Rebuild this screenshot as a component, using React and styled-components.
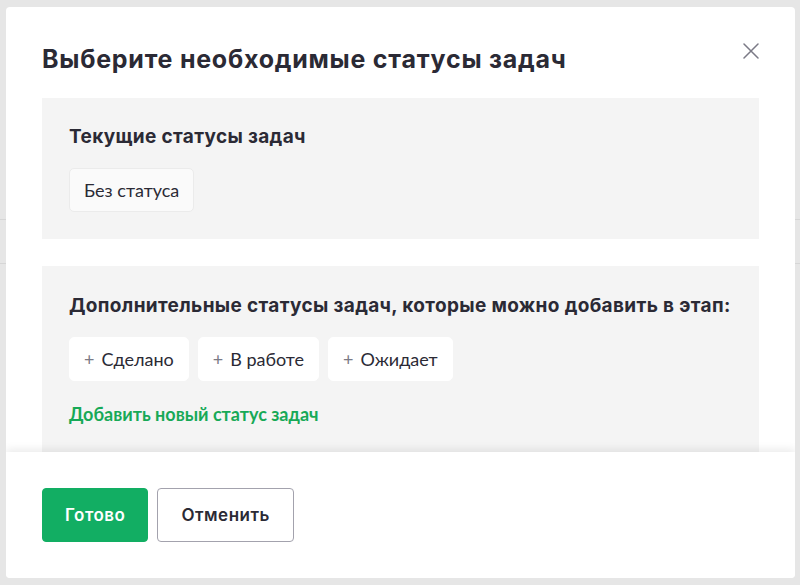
import React from "react";
import styled, { createGlobalStyle } from "styled-components";

const GlobalStyle = createGlobalStyle`
  html, body {
    margin: 0;
    padding: 0;
    background: #e5e5e5;
  }
  * {
    box-sizing: border-box;
  }
`;

const Page = styled.div`
  width: 800px;
  height: 585px;
  padding: 7px 5px 7px 6px;
  background-color: #e6e6e6;
  background-image: linear-gradient(
    to bottom,
    transparent 219px,
    #d6d6d6 219px,
    #d6d6d6 220px,
    transparent 220px,
    transparent 263px,
    #d6d6d6 263px,
    #d6d6d6 264px,
    transparent 264px
  );
`;

const Modal = styled.div`
  position: relative;
  width: 789px;
  height: 571px;
  background: #fff;
  border-radius: 4px;
  overflow: hidden;
  display: flex;
  flex-direction: column;
`;

const Body = styled.div`
  height: 445px;
  overflow: hidden;
  padding: 0 36px;
`;

const Header = styled.div`
  display: flex;
  justify-content: space-between;
  align-items: flex-start;
  padding-top: 36px;
  height: 91px;
`;

const Title = styled.h1`
  margin: 0;
  font-family: Inter, "Noto Sans", sans-serif;
  font-weight: 700;
  font-size: 25px;
  line-height: 32px;
  letter-spacing: 0.75px;
  color: #2b2a35;
`;

const Close = styled.button`
  border: none;
  background: none;
  padding: 0;
  width: 16px;
  height: 16px;
  cursor: pointer;
  display: flex;
`;

const Panel = styled.section`
  background: #f4f4f4;
  padding: ${(p) => p.$pad};
  & + & {
    margin-top: 27px;
  }
`;

const PanelTitle = styled.h2`
  margin: 0 0 19px;
  font-family: Inter, "Noto Sans", sans-serif;
  font-weight: 700;
  font-size: 19px;
  line-height: 24px;
  letter-spacing: 0.35px;
  color: #2b2a35;
`;

const Chips = styled.div`
  display: flex;
  gap: 9px;
`;

const Chip = styled.button`
  display: flex;
  align-items: center;
  gap: 7px;
  height: 44px;
  padding: 0 14px;
  border-radius: 5px;
  font-family: Lato, sans-serif;
  font-size: 18px;
  color: #2b2a35;
  background: ${(p) => (p.$muted ? "#fafafa" : "#fff")};
  border: 1px solid ${(p) => (p.$muted ? "#ebebeb" : "#fff")};
  cursor: pointer;
`;

const Plus = styled.span`
  color: #7b7a86;
  font-size: 18px;
  line-height: 1;
`;

const AddLink = styled.a`
  display: inline-block;
  margin-top: 22px;
  font-family: Lato, sans-serif;
  font-weight: 700;
  font-size: 18px;
  color: #17a957;
  text-decoration: none;
  cursor: pointer;
`;

const Footer = styled.div`
  flex: 1;
  display: flex;
  gap: 9px;
  align-items: flex-start;
  padding: 36px 36px;
  background: #fff;
  box-shadow: 0 -3px 8px rgba(0, 0, 0, 0.08);
  z-index: 1;
`;

const Button = styled.button`
  height: 54px;
  padding: 0 ${(p) => (p.$primary ? "22px" : "23px")};
  border-radius: 4px;
  font-family: Inter, "Noto Sans", sans-serif;
  font-weight: 600;
  font-size: 17px;
  letter-spacing: 0.5px;
  cursor: pointer;
  color: ${(p) => (p.$primary ? "#fff" : "#2b2a35")};
  background: ${(p) => (p.$primary ? "#12ae63" : "#fff")};
  border: 1px solid ${(p) => (p.$primary ? "#12ae63" : "#a3a2ad")};
`;

const extra = ["Сделано", "В работе", "Ожидает"];

export default function App() {
  return (
    <>
      <GlobalStyle />
      <Page>
        <Modal>
          <Body>
            <Header>
              <Title>Выберите необходимые статусы задач</Title>
              <Close aria-label="Закрыть">
                <svg width="16" height="16" viewBox="0 0 16 16">
                  <path
                    d="M1 1L15 15M15 1L1 15"
                    stroke="#7b7a86"
                    strokeWidth="1.5"
                    strokeLinecap="round"
                  />
                </svg>
              </Close>
            </Header>
            <Panel $pad="27px 27px 27px">
              <PanelTitle>Текущие статусы задач</PanelTitle>
              <Chips>
                <Chip $muted>Без статуса</Chip>
              </Chips>
            </Panel>
            <Panel $pad="28px 27px 40px">
              <PanelTitle>
                Дополнительные статусы задач, которые можно добавить в этап:
              </PanelTitle>
              <Chips>
                {extra.map((s) => (
                  <Chip key={s}>
                    <Plus>+</Plus>
                    {s}
                  </Chip>
                ))}
              </Chips>
              <AddLink>Добавить новый статус задач</AddLink>
            </Panel>
          </Body>
          <Footer>
            <Button $primary>Готово</Button>
            <Button>Отменить</Button>
          </Footer>
        </Modal>
      </Page>
    </>
  );
}
